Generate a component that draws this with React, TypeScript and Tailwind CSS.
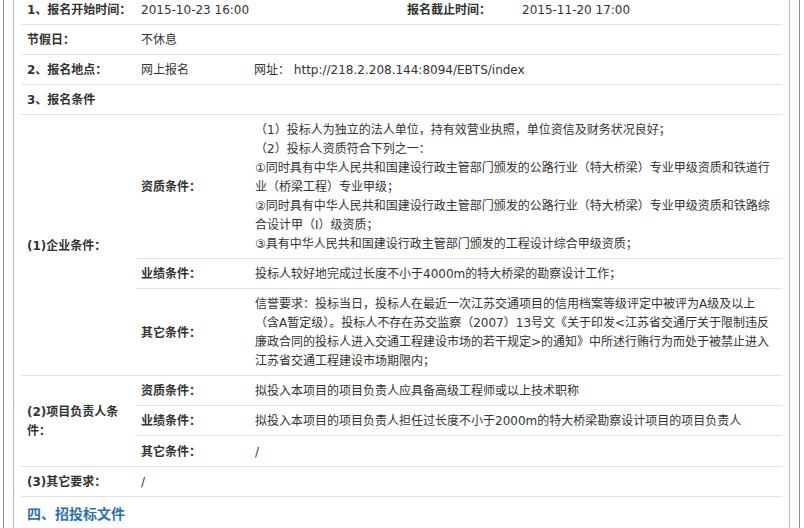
import React from "react";

const label = "font-bold text-[#333]";
const row = "border-b border-[#dfe3e6]";

const SubRow = ({
  title,
  lines,
  last,
}: {
  title: string;
  lines: string[];
  last?: boolean;
}) => (
  <div
    className={`grid grid-cols-[114px_1fr] ${last ? "" : row} ${
      lines.length > 1 ? "pb-[4px] pt-[6px]" : "h-[30px] pt-[2px]"
    } items-center`}
  >
    <div className={`${label} pl-[5px]`}>{title}</div>
    <div className="pl-[5px]">
      {lines.map((l, i) => (
        <div key={i} className="whitespace-nowrap">
          {l}
        </div>
      ))}
    </div>
  </div>
);

export default function App() {
  return (
    <div
      className="h-[528px] w-[804px] overflow-hidden bg-white pl-[3px] pr-[4px] text-[12px] leading-[19px] text-[#333]"
      style={{ fontFamily: '"DejaVu Sans", "Noto Sans CJK SC", sans-serif' }}
    >
      <div className="h-full border-x border-[#8c8c8c] px-[9px]">
        <div className="h-full overflow-hidden border-x border-[#a7bbe3] pl-[7px] pr-[7px]">
          <div className="-mt-[5px]">
            <div className={`grid h-[30px] grid-cols-[115px_265px_115px_1fr] items-center pt-[2px] ${row}`}>
              <div className={`${label} pl-[6px]`}>1、报名开始时间：</div>
              <div className="pl-[5px]">2015-10-23 16:00</div>
              <div className={`${label} pl-[6px]`}>报名截止时间：</div>
              <div className="pl-[6px]">2015-11-20 17:00</div>
            </div>
            <div className={`grid h-[30px] grid-cols-[115px_1fr] items-center pt-[2px] ${row}`}>
              <div className={`${label} pl-[6px]`}>节假日：</div>
              <div className="pl-[5px]">不休息</div>
            </div>
            <div className={`grid h-[30px] grid-cols-[115px_114px_1fr] items-center pt-[2px] ${row}`}>
              <div className={`${label} pl-[6px]`}>2、报名地点：</div>
              <div className="pl-[5px]">网上报名</div>
              <div className="pl-[4px]">网址： http://218.2.208.144:8094/EBTS/index</div>
            </div>
            <div className={`flex h-[30px] items-center pt-[2px] ${row}`}>
              <div className={`${label} pl-[6px]`}>3、报名条件</div>
            </div>

            <div className={`flex ${row}`}>
              <div className={`${label} flex w-[115px] shrink-0 items-center pl-[6px] pt-[2px]`}>
                (1)企业条件：
              </div>
              <div className="flex-1">
                <SubRow
                  title="资质条件："
                  lines={[
                    "（1）投标人为独立的法人单位，持有效营业执照，单位资信及财务状况良好；",
                    "（2）投标人资质符合下列之一：",
                    "①同时具有中华人民共和国建设行政主管部门颁发的公路行业（特大桥梁）专业甲级资质和铁道行",
                    "业（桥梁工程）专业甲级；",
                    "②同时具有中华人民共和国建设行政主管部门颁发的公路行业（特大桥梁）专业甲级资质和铁路综",
                    "合设计甲（I）级资质；",
                    "③具有中华人民共和国建设行政主管部门颁发的工程设计综合甲级资质；",
                  ]}
                />
                <SubRow
                  title="业绩条件："
                  lines={["投标人较好地完成过长度不小于4000m的特大桥梁的勘察设计工作；"]}
                />
                <SubRow
                  title="其它条件："
                  last
                  lines={[
                    "信誉要求：投标当日，投标人在最近一次江苏交通项目的信用档案等级评定中被评为A级及以上",
                    "（含A暂定级）。投标人不存在苏交监察（2007）13号文《关于印发<江苏省交通厅关于限制违反",
                    "廉政合同的投标人进入交通工程建设市场的若干规定>的通知》中所述行贿行为而处于被禁止进入",
                    "江苏省交通工程建设市场期限内；",
                  ]}
                />
              </div>
            </div>

            <div className={`flex ${row}`}>
              <div className={`${label} flex w-[115px] shrink-0 items-center pl-[6px] pt-[2px]`}>
                <div>
                  (2)项目负责人条
                  <br />
                  件：
                </div>
              </div>
              <div className="flex-1">
                <SubRow
                  title="资质条件："
                  lines={["拟投入本项目的项目负责人应具备高级工程师或以上技术职称"]}
                />
                <SubRow
                  title="业绩条件："
                  lines={["拟投入本项目的项目负责人担任过长度不小于2000m的特大桥梁勘察设计项目的项目负责人"]}
                />
                <SubRow title="其它条件：" last lines={["/"]} />
              </div>
            </div>

            <div className={`grid h-[30px] grid-cols-[115px_1fr] items-center pt-[2px] ${row}`}>
              <div className={`${label} pl-[6px]`}>(3)其它要求：</div>
              <div className="pl-[5px]">/</div>
            </div>

            <div className="flex h-[30px] items-center pl-[6px] pt-[4px] text-[14px] font-bold text-[#2b6fb4]">
              四、招投标文件
            </div>
          </div>
        </div>
      </div>
    </div>
  );
}
